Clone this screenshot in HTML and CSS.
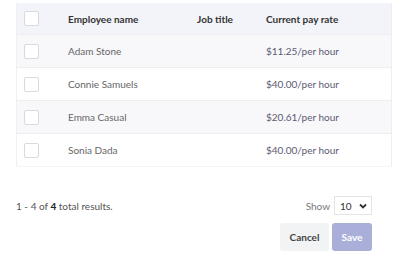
FILE: index.html
```html
<!DOCTYPE html>
<html lang="en">
<head>
    <meta charset="UTF-8">
    <meta name="viewport" content="width=device-width, initial-scale=1.0">
    <title>Employees</title>
    <link rel="stylesheet" href="styles.css">
</head>
<body>
    <div class="panel">
        <div class="table-card">
            <div class="row head">
                <span class="check"></span>
                <span class="col name">Employee name</span>
                <span class="col job">Job title</span>
                <span class="col rate">Current pay rate</span>
            </div>
            <div class="row shaded">
                <span class="check"></span>
                <span class="col name">Adam Stone</span>
                <span class="col job"></span>
                <span class="col rate">$11.25/per hour</span>
            </div>
            <div class="row">
                <span class="check"></span>
                <span class="col name">Connie Samuels</span>
                <span class="col job"></span>
                <span class="col rate">$40.00/per hour</span>
            </div>
            <div class="row shaded">
                <span class="check"></span>
                <span class="col name">Emma Casual</span>
                <span class="col job"></span>
                <span class="col rate">$20.61/per hour</span>
            </div>
            <div class="row">
                <span class="check"></span>
                <span class="col name">Sonia Dada</span>
                <span class="col job"></span>
                <span class="col rate">$40.00/per hour</span>
            </div>
        </div>

        <div class="footer">
            <div class="results">1 - 4 of <b>4</b> total results.</div>
            <div class="show">
                Show
                <div class="select">
                    <span>10</span>
                    <svg width="8" height="6" viewBox="0 0 8 6"><path d="M1 1.5 L4 4.5 L7 1.5" fill="none" stroke="#333" stroke-width="1.8"/></svg>
                </div>
            </div>
        </div>

        <div class="actions">
            <button class="btn cancel">Cancel</button>
            <button class="btn save" disabled>Save</button>
        </div>
    </div>
</body>
</html>
```

FILE: styles.css
```css
body {
    margin: 0;
    background: #fff;
    font-family: Lato, "Liberation Sans", sans-serif;
    color: #555;
}
.panel {
    padding: 3px 9px 0 16px;
    width: 376px;
}
.table-card {
    border: 1px solid #eeeef2;
    border-top: none;
    border-left: 1px solid #f0f0f3;
    border-bottom-color: #f5f5f7;
}
.row {
    display: flex;
    align-items: center;
    height: 32px;
    font-size: 10px;
    color: #666;
    border-bottom: 1px solid #eeeef1;
}
.row:last-child {
    border-bottom: none;
}
.row.head {
    height: 31px;
    background: #f3f4f9;
    color: #333;
    font-weight: bold;
}
.row.shaded {
    background: #f8f8fa;
}
.check {
    width: 13px;
    height: 13px;
    border: 1px solid #d9d9de;
    border-radius: 2px;
    background: #fff;
    margin-left: 7px;
    flex: none;
}
.col.name {
    margin-left: 29px;
    width: 129px;
}
.col.job {
    width: 69px;
}
.row .rate {
    color: #5b5a72;
}
.row.head .rate {
    color: #333;
}
.footer {
    display: flex;
    justify-content: space-between;
    align-items: center;
    margin-top: 29px;
    padding-right: 20px;
    font-size: 10px;
    color: #555;
}
.results b {
    color: #222;
}
.show {
    display: flex;
    align-items: center;
    gap: 4px;
    font-size: 10px;
    color: #777;
}
.select {
    display: flex;
    align-items: center;
    justify-content: space-between;
    width: 27px;
    height: 17px;
    padding: 0 4px 0 5px;
    border: 1px solid #e3e3e8;
    color: #333;
}
.actions {
    display: flex;
    justify-content: flex-end;
    gap: 3px;
    margin-top: 8px;
    padding-right: 20px;
}
.btn {
    height: 28px;
    border: none;
    border-radius: 3px;
    font-family: inherit;
    font-size: 10px;
    font-weight: bold;
}
.cancel {
    width: 49px;
    background: #f2f3f5;
    color: #444;
}
.save {
    width: 40px;
    background: #a9afd9;
    color: #fff;
}
```
